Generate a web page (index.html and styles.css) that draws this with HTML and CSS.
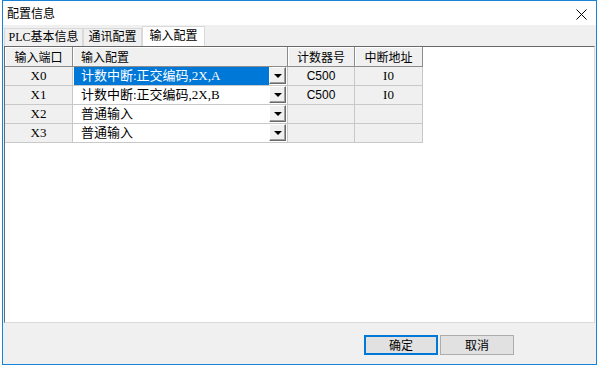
FILE: index.html
```html
<!DOCTYPE html>
<html lang="zh-CN">
<head>
  <meta charset="UTF-8">
  <title>配置信息</title>
  <link rel="stylesheet" href="styles.css">
</head>
<body>

<div class="screen">
  <div class="window">
    <div class="titlebar">
      <span class="title">配置信息</span>
      <svg class="close" width="11" height="11" viewBox="0 0 11 11">
        <path d="M0.5 0.5 L10.5 10.5 M10.5 0.5 L0.5 10.5" stroke="#000" stroke-width="1" fill="none"/>
      </svg>
    </div>

    <div class="tabs">
      <div class="tab tab-plc">PLC基本信息</div>
      <div class="tab tab-comm">通讯配置</div>
      <div class="tab tab-input active">输入配置</div>
    </div>

    <div class="grid">
      <div class="table">
        <div class="th center">输入端口</div>
        <div class="th left">输入配置</div>
        <div class="th center">计数器号</div>
        <div class="th center">中断地址</div>

        <div class="td port">X0</div>
        <div class="td combo">
          <span class="combo-text selected">计数中断:正交编码,2X,A</span>
          <span class="combo-btn"><i class="arrow"></i></span>
        </div>
        <div class="td counter">C500</div>
        <div class="td addr">I0</div>

        <div class="td port">X1</div>
        <div class="td combo">
          <span class="combo-text">计数中断:正交编码,2X,B</span>
          <span class="combo-btn"><i class="arrow"></i></span>
        </div>
        <div class="td counter">C500</div>
        <div class="td addr">I0</div>

        <div class="td port">X2</div>
        <div class="td combo">
          <span class="combo-text">普通输入</span>
          <span class="combo-btn"><i class="arrow"></i></span>
        </div>
        <div class="td counter"></div>
        <div class="td addr"></div>

        <div class="td port">X3</div>
        <div class="td combo">
          <span class="combo-text">普通输入</span>
          <span class="combo-btn"><i class="arrow"></i></span>
        </div>
        <div class="td counter"></div>
        <div class="td addr"></div>
      </div>
    </div>

    <div class="footer">
      <button class="btn default">确定</button>
      <button class="btn">取消</button>
    </div>
  </div>
</div>

</body>
</html>
```

FILE: styles.css
```css
body {
  margin: 0;
  background: #fff;
  font-family: "Liberation Serif", "Noto Sans CJK SC", serif;
  font-size: 12px;
  color: #000;
}

.screen {
  padding-left: 2px;
  width: 599px;
  height: 367px;
  box-sizing: border-box;
}

.window {
  width: 595px;
  height: 365px;
  box-sizing: border-box;
  border: 1px solid #1883d7;
  background: #f0f0f0;
  display: flex;
  flex-direction: column;
}

.titlebar {
  height: 24px;
  background: #fff;
  display: flex;
  align-items: center;
  justify-content: space-between;
  padding: 0 9px 0 4px;
}

.title {
  font-family: "Noto Sans CJK SC", sans-serif;
  font-size: 12px;
  line-height: 14px;
}

.close {
  display: block;
  margin-top: 2px;
}

/* tab strip */
.tabs {
  height: 21px;
  display: flex;
  align-items: flex-end;
  padding-left: 1px;
}

.tab {
  box-sizing: border-box;
  height: 18px;
  border: 1px solid #d9d9d9;
  border-bottom: none;
  text-align: center;
  line-height: 16px;
  white-space: nowrap;
}

.tab-plc { width: 79px; }
.tab-comm { width: 59px; }
.tab-input { width: 63px; }

.tab.active {
  height: 20px;
  background: #fff;
  line-height: 18px;
}

/* grid */
.grid {
  height: 277px;
  box-sizing: border-box;
  margin: 0 1px;
  background: #fff;
  border-top: 1px solid #696969;
  border-left: 1px solid #696969;
  border-right: 1px solid #dadada;
  border-bottom: 1px solid #dadada;
}

.table {
  display: grid;
  grid-template-columns: 68px 215px 67px 68px;
  grid-template-rows: 20px repeat(4, 19px);
}

.th, .td {
  box-sizing: border-box;
  border-right: 1px solid #c8c8c8;
  border-bottom: 1px solid #c8c8c8;
  white-space: nowrap;
  overflow: hidden;
}

.th {
  background: #f0f0f0;
  border-right-color: #8c8c8c;
  border-bottom-color: #8c8c8c;
  box-shadow: inset 1px 1px #fff;
  font-family: "Noto Sans CJK SC", sans-serif;
  line-height: 19px;
}

.th.center { text-align: center; }
.th.left { padding-left: 8px; }

.td {
  background: #f0f0f0;
  line-height: 18px;
  text-align: center;
  font-size: 13px;
}

.td.counter {
  font-family: "Liberation Sans", sans-serif;
  font-size: 12px;
}

.td.combo {
  background: #fff;
  display: flex;
  align-items: flex-start;
  text-align: left;
}

.combo-text {
  flex: 1;
  height: 18px;
  margin-left: 1px;
  padding-left: 7px;
  line-height: 18px;
}

.combo-text.selected {
  background: #0078d7;
  color: #fff;
}

.combo-btn {
  width: 17px;
  height: 17px;
  margin-right: 1px;
  box-sizing: border-box;
  background: #f0f0f0;
  border-top: 1px solid #fff;
  border-left: 1px solid #fff;
  border-right: 1px solid #696969;
  border-bottom: 1px solid #696969;
  box-shadow: inset -1px -1px #a0a0a0;
  display: flex;
  align-items: center;
  justify-content: center;
}

.arrow {
  display: block;
  width: 0;
  height: 0;
  border-left: 4px solid transparent;
  border-right: 4px solid transparent;
  border-top: 4px solid #000;
  margin-top: 1px;
}

/* buttons */
.footer {
  height: 41px;
  display: flex;
  justify-content: flex-end;
  align-items: flex-start;
  gap: 2px;
  padding: 12px 82px 0 0;
  box-sizing: border-box;
}

.btn {
  width: 74px;
  height: 20px;
  box-sizing: border-box;
  background: #e1e1e1;
  border: 1px solid #adadad;
  font-family: "Noto Sans CJK SC", sans-serif;
  font-size: 12px;
  line-height: 16px;
  padding: 0;
  color: #000;
}

.btn.default {
  border: 2px solid #0078d7;
}
```
